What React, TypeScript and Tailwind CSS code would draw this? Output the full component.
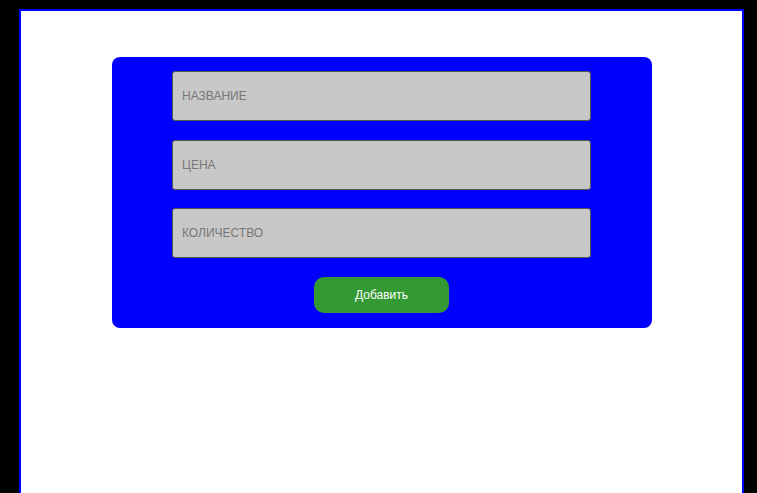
import React, { useState } from 'react';

const fields = [
  { name: 'title', placeholder: 'НАЗВАНИЕ' },
  { name: 'price', placeholder: 'ЦЕНА' },
  { name: 'count', placeholder: 'КОЛИЧЕСТВО' },
];

export default function App() {
  const [form, setForm] = useState<Record<string, string>>({ title: '', price: '', count: '' });

  return (
    <div className="h-screen bg-black pt-[9px] pl-[19px] overflow-hidden" style={{ fontFamily: '"Liberation Sans", Arial, sans-serif' }}>
      <div className="w-[725px] h-[520px] border-2 border-[#0000ff] bg-white">
        <form
          className="mx-auto mt-[46px] w-[540px] rounded-lg bg-[#0000ff] pt-[14px] pb-[15px] flex flex-col items-center gap-[18.5px]"
          onSubmit={(e) => e.preventDefault()}
        >
          {fields.map((f) => (
            <input
              key={f.name}
              type="text"
              placeholder={f.placeholder}
              value={form[f.name]}
              onChange={(e) => setForm({ ...form, [f.name]: e.target.value })}
              className="w-[419px] h-[50px] rounded-[3px] border border-[#555] bg-[#c8c8c8] px-[9px] text-[12px] text-[#333] placeholder:text-[#777] outline-none"
            />
          ))}
          <button
            type="submit"
            className="w-[135px] h-[36px] rounded-[10px] bg-[#339933] text-[12px] text-white"
          >
            Добавить
          </button>
        </form>
      </div>
    </div>
  );
}
